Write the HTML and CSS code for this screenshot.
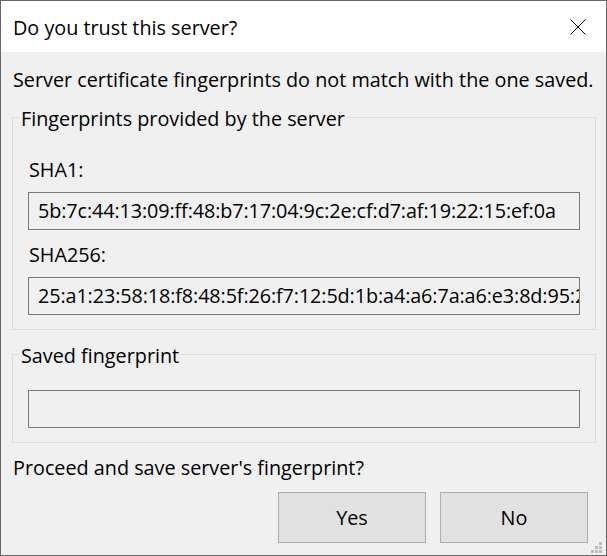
FILE: index.html
```html
<!DOCTYPE html>
<html>
<head>
<meta charset="utf-8">
<link rel="stylesheet" href="styles.css">
</head>
<body>
<div class="window">
  <div class="titlebar">
    <span class="title">Do you trust this server?</span>
    <svg class="close" width="16" height="16" viewBox="0 0 16 16"><path d="M0.5 0.5 L15.5 15.5 M15.5 0.5 L0.5 15.5" stroke="#000" stroke-width="1" fill="none"/></svg>
  </div>
  <div class="content">
    <p class="message">Server certificate fingerprints do not match with the one saved.</p>
    <fieldset class="group">
      <legend>Fingerprints provided by the server</legend>
      <div class="label">SHA1:</div>
      <div class="field">5b:7c:44:13:09:ff:48:b7:17:04:9c:2e:cf:d7:af:19:22:15:ef:0a</div>
      <div class="label label-gap">SHA256:</div>
      <div class="field">25:a1:23:58:18:f8:48:5f:26:f7:12:5d:1b:a4:a6:7a:a6:e3:8d:95:2e:4b:7c:91</div>
    </fieldset>
    <fieldset class="group group-saved">
      <legend>Saved fingerprint</legend>
      <div class="field field-empty"></div>
    </fieldset>
    <p class="question">Proceed and save server's fingerprint?</p>
    <div class="buttons">
      <button class="btn">Yes</button>
      <button class="btn">No</button>
    </div>
  </div>
  <div class="grip">
    <span class="dot d1"></span>
    <span class="dot d2"></span><span class="dot d3"></span>
    <span class="dot d4"></span><span class="dot d5"></span><span class="dot d6"></span>
  </div>
</div>
</body>
</html>
```
FILE: styles.css
```css
html, body {
  margin: 0;
  padding: 0;
  background: #f0f0f0;
}
.window {
  position: relative;
  width: 607px;
  height: 556px;
  box-sizing: border-box;
  border: 1px solid #666666;
  background: #f0f0f0;
  font-family: "Open Sans", "Noto Sans", sans-serif;
  font-size: 19.8px;
  line-height: 26px;
  color: #000;
  display: flex;
  flex-direction: column;
  overflow: hidden;
}
.titlebar {
  flex-shrink: 0;
  height: 51px;
  background: #ffffff;
  display: flex;
  align-items: center;
  justify-content: space-between;
  padding: 2px 20px 0 12px;
  box-sizing: border-box;
}
.close {
  display: block;
  margin-top: -2px;
}
.content {
  flex-shrink: 0;
  padding: 0 18px 0 11px;
}
.message {
  margin: 15px -12px 0 1px;
  white-space: nowrap;
}
.group {
  margin: 10px 0 0 0;
  border: 1px solid #dcdcdc;
  padding: 25px 15px 14px 15px;
  min-width: 0;
  width: 584px;
  box-sizing: border-box;
}
.group legend {
  padding: 3px 2px 0 2px;
  margin-left: -9px;
}
.group-saved {
  padding-top: 21px;
}
.label {
  padding-left: 1px;
}
.label-gap {
  margin-top: 12px;
}
.field {
  margin-top: 9px;
  height: 38px;
  box-sizing: border-box;
  border: 1px solid #7a7a7a;
  background: #f0f0f0;
  padding: 0 9px;
  line-height: 36px;
  letter-spacing: -0.1px;
  white-space: nowrap;
  overflow: hidden;
}
.field-empty {
  margin-top: 0;
}
.question {
  margin: 12px 0 0 1px;
}
.buttons {
  margin-top: 11px;
  display: flex;
  justify-content: flex-end;
  gap: 14px;
}
.btn {
  width: 148px;
  height: 51px;
  box-sizing: border-box;
  border: 1px solid #adadad;
  background: #e1e1e1;
  font: inherit;
  color: #000;
  padding: 0;
  border-radius: 0;
}
.grip {
  position: absolute;
  right: 4px;
  bottom: 2px;
  width: 11px;
  height: 11px;
}
.dot {
  position: absolute;
  width: 3px;
  height: 3px;
  background: #bcbcbc;
}
.d1 { left: 8px; top: 0; }
.d2 { left: 4px; top: 4px; }
.d3 { left: 8px; top: 4px; }
.d4 { left: 0; top: 8px; }
.d5 { left: 4px; top: 8px; }
.d6 { left: 8px; top: 8px; }
```
